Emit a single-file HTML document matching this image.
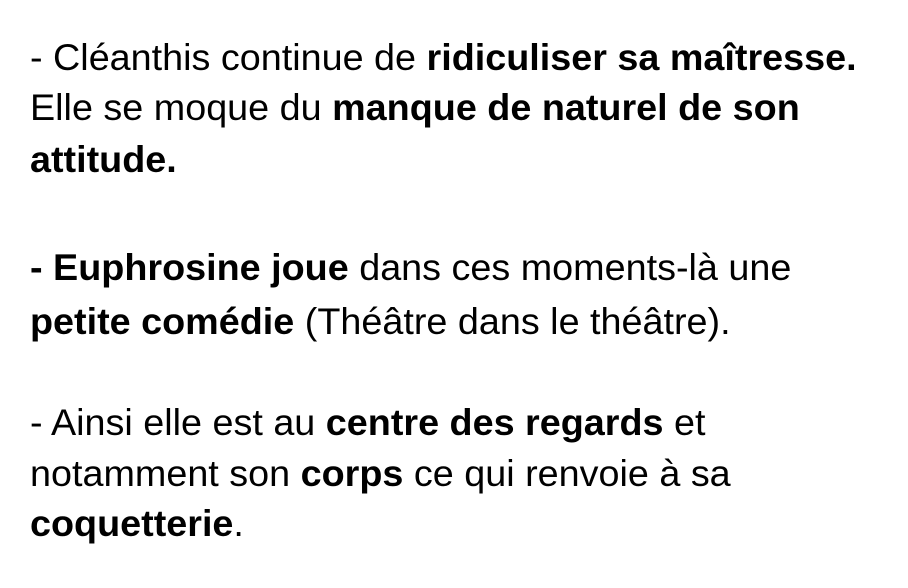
<!DOCTYPE html>
<html><head><meta charset="utf-8"><style>
html,body{margin:0;padding:0;background:#fff;width:908px;height:588px;overflow:hidden}
.l{position:absolute;left:30px;white-space:nowrap;font-family:"Liberation Sans",sans-serif;font-size:37px;color:#000;transform:scaleX(1.02);transform-origin:0 0;line-height:44px}
b{font-weight:bold}
</style></head><body>
<div class="l" style="top:36px">- Cléanthis continue de <b>ridiculiser sa maîtresse.</b></div>
<div class="l" style="top:86px">Elle se moque du <b>manque de naturel de son</b></div>
<div class="l" style="top:138px"><b>attitude.</b></div>
<div class="l" style="top:246px"><b>- Euphrosine joue</b> dans ces moments-là une</div>
<div class="l" style="top:300px"><b>petite comédie</b> (Théâtre dans le théâtre).</div>
<div class="l" style="top:401px">- Ainsi elle est au <b>centre des regards</b> et</div>
<div class="l" style="top:452px">notamment son <b>corps</b> ce qui renvoie à sa</div>
<div class="l" style="top:502px"><b>coquetterie</b>.</div>
</body></html>
